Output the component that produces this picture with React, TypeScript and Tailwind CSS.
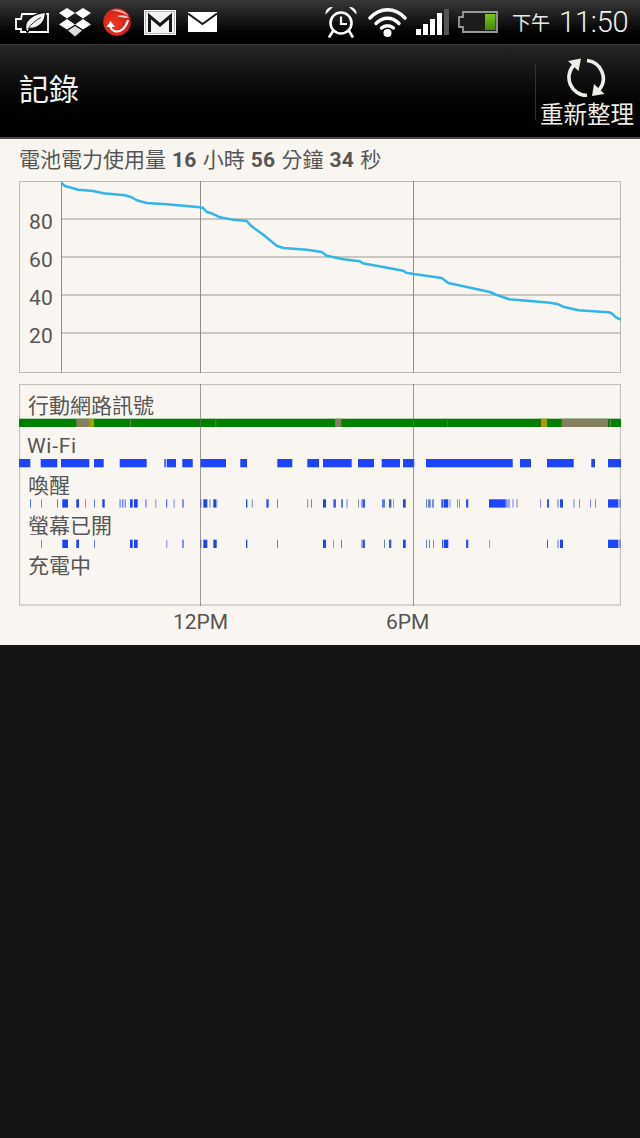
import React from "react";

const FONT = "font-['Roboto','Noto_Sans_CJK_TC',sans-serif]";

type Seg = [number, number, number?];

const wifi: Seg[] = [[19,30.3],[40.7,57.3],[61,89.3],[94,103.7],[119.7,146.7],[164,166,0.7],[166.7,176],[182.3,192.7],[200.3,226],[240.3,247],[277.3,292.3],[307.3,319],[323,351.7],[358,374],[381.7,400],[403,414.3],[426,512.7],[520,531],[547,573.7],[591.3,595],[608,621]];

const wake: Seg[] = [[30,31,0.8],[41,42,0.6],[57,58,0.7],[62.3,68],[76.3,79],[85,86,0.6],[94,95,0.7],[102.3,104.7],[119.3,121,0.5],[122,123.3,0.7],[124.7,125.7,0.8],[130,132.7],[134,137.7],[145,146.7,0.5],[155.3,156.3,0.6],[166,167.3,0.7],[173.5,174.7,0.5],[182.3,183.7,0.8],[200.3,201.3,0.9],[203.3,207.3],[209.3,210.7,0.5],[213.3,216,1],[216,217.3,0.5],[246,247.3],[251.7,253,0.5],[266.3,268.7,0.9],[277,278,0.7],[307,308.3,0.5],[311,312,0.7],[323,326],[333.3,336,0.85],[341,343,0.7],[346,348,0.35],[358,359,0.6],[361.3,363,0.6],[363,365,0.9],[382,385,0.7],[389,391.3,0.9],[393,394,0.5],[403,405.7],[426,427,0.7],[428,430.7,0.7],[432,434,0.6],[441.3,443,0.9],[443.5,448.3],[449.3,451,0.35],[457,458,0.6],[459,460,0.6],[466,468.3,0.9],[489,505],[505,506.5,0.8],[506.5,510,0.45],[512,514,0.35],[516.3,518,0.4],[540,541,0.6],[547,549,0.9],[557,559,0.4],[560,563],[573,575,0.35],[579,580,0.6],[590,591,0.6],[595,596,0.6],[608,618],[618,621,0.45]];

const screen: Seg[] = [[41,42,0.6],[62.3,68],[76.3,79],[94,95,0.7],[130,132.7],[134,137.7],[166.3,167.3,0.6],[182.3,183.7,0.8],[200.3,201.3,0.9],[203.3,207.3],[213.3,216.7],[246,247.3],[277,278,0.7],[323,326],[333.3,334,0.7],[341,342,0.7],[361.3,363,0.6],[363,365,0.9],[384,385,0.7],[389,391.3,0.9],[403,405.7],[426,427,0.7],[429,430,0.7],[433,434,0.6],[442,443.3,0.9],[444,448.3],[466,468.3,0.9],[489,490,0.5],[547,548,0.9],[557,559,0.4],[560,563],[608,618],[618,621,0.45]];

const curve = "61.7,183.3 65,186 78.3,189.7 93.3,191 103.3,193.3 125,195.3 131.7,197.3 136.7,200.3 146.7,203 166.7,204.3 200,207.3 203.3,208 206.7,212 211.7,213.3 220,217.3 233.3,219.7 246.7,221 251.7,226.3 263.3,234.7 276.7,245.7 283.3,248 306.7,249.7 321.7,252 326.7,255.7 343.3,259.3 360,261.3 362.7,263.3 403.3,270.7 406,272.7 413.7,274 441.7,278 448.3,283 490,292 496.7,295 509.3,299.3 550,302.7 558.3,304.3 563.3,306.7 578.3,310.3 608.3,312.3 611.7,313.3 616,317.3 620.7,319.7";

function Bars({ data, y }: { data: Seg[]; y: number }) {
  return (
    <>
      {data.map(([a, b, o], i) => (
        <rect key={i} x={a} y={y} width={b - a} height={8.3} fill="#1f44ff" opacity={o ?? 1} />
      ))}
    </>
  );
}

function LeafBattery() {
  return (
    <svg width="34" height="23" viewBox="0 0 34 23" className="shrink-0">
      <path d="M7 3h26v18H6v-3H1V8h5z" fill="none" stroke="#fff" strokeWidth="1.800" />
      <path d="M11 19.500C8 10 17 3 30.500 1 31 11 24 17.500 15 17.500L12.500 21.500z" fill="#f2f2f2" stroke="#0c0c0c" strokeWidth="1.500" />
      <path d="M13 18C16 13 21 9 26 6.500" fill="none" stroke="#333" strokeWidth="1" />
    </svg>
  );
}

function Dropbox() {
  return (
    <svg width="34" height="29" viewBox="0 0 34 29" className="shrink-0">
      <g fill="#fff">
        <polygon points="9,0 17,5 9,10.500 1,5" />
        <polygon points="25,0 33,5 25,10.500 17,5" />
        <polygon points="9,11 17,16.500 9,21.500 1,16.500" />
        <polygon points="25,11 33,16.500 25,21.500 17,16.500" />
      </g>
      <polygon points="17,18 24,22.500 17,28.500 10,22.500" fill="#ddd" />
    </svg>
  );
}

function Trend() {
  return (
    <svg width="28" height="28" viewBox="0 0 28 28" className="shrink-0">
      <defs>
        <radialGradient id="tm" cx="0.4" cy="0.6" r="0.75">
          <stop offset="0" stopColor="#ee3a22" />
          <stop offset="0.7" stopColor="#d8201a" />
          <stop offset="1" stopColor="#a81410" />
        </radialGradient>
      </defs>
      <circle cx="14" cy="14" r="13.800" fill="url(#tm)" />
      <path d="M8 2.500C14 0 22 2 25.500 8 20 4.500 14 3 8 2.500z" fill="#f4a898" />
      <path d="M14 8C19 6.500 24 7.500 26 10 22 9.500 18 9.500 14 8z" fill="#fbd8cc" />
      <path d="M7.500 18C8 23.500 15 25.500 20 21 23 18 24.500 14.500 25 12" fill="none" stroke="#fff" strokeWidth="2.200" />
      <polygon points="3.500,19 12,19 7.500,13" fill="#fff" />
    </svg>
  );
}

function Gmail() {
  return (
    <svg width="32" height="25" viewBox="0 0 32 25" className="shrink-0">
      <rect width="32" height="25" fill="#fff" />
      <rect x="1.500" y="1.500" width="29" height="22" fill="#f4f4f4" stroke="#888" strokeWidth="0.600" />
      <path d="M5.500 22V6L16 15 26.500 6V22" fill="none" stroke="#161616" strokeWidth="3" />
    </svg>
  );
}

function Mail() {
  return (
    <svg width="29" height="20" viewBox="0 0 29 20" className="shrink-0">
      <rect width="29" height="20" fill="#fff" />
      <path d="M0 1.500L14.500 12 29 1.500" fill="none" stroke="#1a1a1a" strokeWidth="2" />
    </svg>
  );
}

function Alarm() {
  return (
    <svg width="32" height="32" viewBox="0 0 32 32" className="shrink-0">
      <circle cx="16" cy="17" r="10.500" fill="none" stroke="#fff" strokeWidth="2.600" />
      <path d="M16 10.500v7.500h6" fill="none" stroke="#fff" strokeWidth="2.200" />
      <path d="M0.500 8.500C0 4 3.500 0.500 8 1z" fill="#fff" />
      <path d="M31.500 8.500C32 4 28.500 0.500 24 1z" fill="#fff" />
      <path d="M8 25l-4 6.500M24 25l4 6.500" stroke="#fff" strokeWidth="2.600" />
    </svg>
  );
}

function WifiIcon() {
  return (
    <svg width="39" height="30" viewBox="0 0 39 30" className="shrink-0">
      <g fill="none" stroke="#fff" strokeWidth="3.400" strokeLinecap="round">
        <path d="M2 11C12 0 27 0 37 11" />
        <path d="M8 16.500C14.500 9.500 24.500 9.500 31 16.500" />
        <path d="M13.500 21C17 18 22 18 25.500 21" />
      </g>
      <circle cx="19.500" cy="26" r="4" fill="#fff" />
    </svg>
  );
}

function Signal() {
  return (
    <svg width="33" height="26" viewBox="0 0 33 26" className="shrink-0">
      <rect x="0" y="20" width="5" height="6" fill="#fff" />
      <rect x="7" y="15" width="5" height="11" fill="#fff" />
      <rect x="14" y="10" width="5" height="16" fill="#fff" />
      <rect x="21" y="4" width="5" height="22" fill="#fff" />
      <rect x="28" y="0" width="5" height="26" fill="#555" />
    </svg>
  );
}

function Battery() {
  return (
    <svg width="40" height="22" viewBox="0 0 40 22" className="shrink-0">
      <defs>
        <linearGradient id="bat" x1="0" y1="0" x2="0" y2="1">
          <stop offset="0" stopColor="#7cc520" />
          <stop offset="1" stopColor="#3f8a08" />
        </linearGradient>
      </defs>
      <path d="M5 1h34v20H5v-5H1V6h4z" fill="#1c1c1c" stroke="#999" strokeWidth="1.800" />
      <rect x="27" y="3" width="10.500" height="16" fill="url(#bat)" />
    </svg>
  );
}

function Refresh() {
  return (
    <svg width="40" height="40" viewBox="12 8 40 40" className="shrink-0">
      <g fill="none" stroke="#f0ece6" strokeWidth="3.600">
        <path d="M32 46.500A18 18 0 0 1 19 16" />
        <path d="M32 11.500A18 18 0 0 1 44 41" />
      </g>
      <polygon points="13,12 26,9.500 23.500,22" fill="#f0ece6" />
      <polygon points="37,47 49.500,45 39,35" fill="#f0ece6" />
    </svg>
  );
}

function RowLabel({ top, children }: { top: number; children: React.ReactNode }) {
  return (
    <span className="absolute left-[9px] text-[21px] leading-[24px] text-[#555] whitespace-nowrap" style={{ top }}>
      {children}
    </span>
  );
}

export default function App() {
  return (
    <div className={`${FONT} h-[1138px] w-[640px] bg-[#151515] flex flex-col overflow-hidden`}>
      <div className="h-[44px] shrink-0 bg-gradient-to-b from-[#383838] via-[#141414] via-50% to-black flex items-center">
        <div className="ml-[15px] flex items-center gap-[9px]"><LeafBattery /><Dropbox /></div>
        <div className="ml-[11px]"><Trend /></div>
        <div className="ml-[13px]"><Gmail /></div>
        <div className="ml-[12px]"><Mail /></div>
        <div className="ml-[108px]"><Alarm /></div>
        <div className="ml-[11px]"><WifiIcon /></div>
        <div className="ml-[9px]"><Signal /></div>
        <div className="ml-[9px]"><Battery /></div>
        <div className="ml-[14px] text-[#e8e8e8] text-[19px] leading-[24px] mt-[3px] whitespace-nowrap">下午</div>
        <div className="ml-[9px] text-[#f0f0f0] text-[29px] font-light leading-[36px] whitespace-nowrap tracking-[-0.2px]">11:50</div>
      </div>
      <div className="h-[95px] shrink-0 bg-gradient-to-b from-[#262626] to-black border-t border-t-[#3a3a3a] border-b-2 border-b-[#4a4a4a] flex items-center">
        <div className="ml-[19px] flex-1 text-[30px] leading-[40px] text-[#f4f4f4] mt-[-3px]">記錄</div>
        <div className="w-[1px] h-[57px] bg-[#333] mt-[1px]" />
        <div className="w-[102px] mr-[2px] flex flex-col items-center mt-[2px]">
          <Refresh />
          <div className="text-[23.500px] leading-[26px] text-[#f0ece6] mt-[5px] whitespace-nowrap">重新整理</div>
        </div>
      </div>
      <div className="h-[506px] shrink-0 bg-[#f9f5f1] px-[19px] flex flex-col">
        <div className="h-[42px] pt-[2px] flex items-center text-[21px] text-[#555] whitespace-nowrap">
          <span className="[word-spacing:0.8px]">電池電力使用量 <b className="tracking-[0.3px]">16</b> 小時 <b className="tracking-[0.3px]">56</b> 分鐘 <b className="tracking-[0.3px]">34</b> 秒</span>
        </div>
        <div className="relative w-[602px] h-[192px]">
          <svg width="602" height="192" viewBox="19 181 602 192" className="block">
            <g stroke="#bdb9b3" fill="none">
              <rect x="19.500" y="181.500" width="601" height="191" strokeWidth="1" />
              <g stroke="#bbb7b0" strokeWidth="1.300">
                <path d="M61 219H621M61 257H621M61 295H621M61 333H621" />
              </g>
            </g>
            <path d="M61.500 181V373M200.500 181V373M413.500 181V373" stroke="#8f8c87" strokeWidth="1" />
            <polyline points={curve} fill="none" stroke="#33b5e5" strokeWidth="2.500" strokeLinejoin="round" />
          </svg>
          {[["80", 29], ["60", 67], ["40", 105], ["20", 143]].map(([t, top]) => (
            <span key={t} className="absolute left-[10px] w-[24px] text-[21px] tracking-[0.3px] leading-[24px] text-[#555]" style={{ top: top as number }}>{t}</span>
          ))}
        </div>
        <div className="relative w-[602px] h-[222px] mt-[11px]">
          <svg width="602" height="222" viewBox="19 384 602 222" className="block">
            <rect x="19.500" y="384.500" width="601" height="220.500" fill="none" stroke="#c4c0ba" strokeWidth="1.200" />
            <rect x="19" y="418.700" width="602" height="8.300" fill="#008000" />
            <rect x="76.300" y="418.700" width="12.700" height="8.300" fill="#857f60" />
            <rect x="89" y="418.700" width="5" height="8.300" fill="#a0a000" />
            <rect x="130" y="418.700" width="1" height="8.300" fill="#5f8a50" />
            <rect x="215.300" y="418.700" width="1" height="8.300" fill="#5f8a50" />
            <rect x="335" y="418.700" width="6.300" height="8.300" fill="#857f60" />
            <rect x="447" y="418.700" width="1" height="8.300" fill="#3f7f3a" />
            <rect x="539.800" y="418.700" width="1" height="8.300" fill="#5a4a10" />
            <rect x="541" y="418.700" width="6" height="8.300" fill="#a0a000" />
            <rect x="561.700" y="418.700" width="46.300" height="8.300" fill="#857f60" />
            <rect x="610" y="418.700" width="1" height="8.300" fill="#5f8a50" />
            <Bars data={wifi} y={459} />
            <Bars data={wake} y={499.300} />
            <Bars data={screen} y={539.700} />
            <path d="M200.500 384V606M413.500 384V606" stroke="#6d6a66" strokeOpacity="0.65" strokeWidth="1" />
          </svg>
          <RowLabel top={10}>行動網路訊號</RowLabel>
          <RowLabel top={50}><span className="tracking-[0.7px] ml-[-1px]">Wi-Fi</span></RowLabel>
          <RowLabel top={90}>喚醒</RowLabel>
          <RowLabel top={130}>螢幕已開</RowLabel>
          <RowLabel top={170}>充電中</RowLabel>
        </div>
        <div className="relative h-[24px] mt-[4px] text-[21px] leading-[24px] text-[#555]">
          <span className="absolute left-[154px]">12PM</span>
          <span className="absolute left-[367px]">6PM</span>
        </div>
      </div>
    </div>
  );
}
